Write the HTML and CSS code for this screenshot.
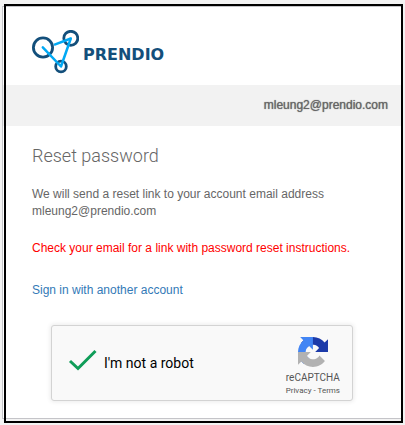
FILE: index.html
```html
<!DOCTYPE html>
<html lang="en">
<head>
<meta charset="utf-8">
<meta name="viewport" content="width=device-width, initial-scale=1">
<title>Reset password</title>
<link rel="stylesheet" href="styles.css">
</head>
<body>
<div class="page">
  <div class="card">
    <header class="brand">
      <svg class="brand-mark" width="48" height="44" viewBox="31 30 48 44" fill="none" aria-hidden="true">
        <g stroke="#134f7b" stroke-width="2.8">
          <circle cx="43" cy="47.5" r="9.6"/>
          <circle cx="70.8" cy="38.3" r="7"/>
          <circle cx="61" cy="66.5" r="5.3"/>
        </g>
        <g stroke="#00a9f4" stroke-width="2.5" stroke-linecap="round" stroke-linejoin="round">
          <path d="M42.8 47.4L61 66.5L70.8 38.5"/>
          <path d="M54 44.8L70.8 38.5" stroke-linecap="butt"/>
        </g>
      </svg>
      <span class="brand-name">PRENDIO</span>
    </header>
    <div class="account-bar">mleung2@prendio.com</div>
    <main class="content">
      <h1 class="title">Reset password</h1>
      <p class="text">We will send a reset link to your account email address<br>mleung2@prendio.com</p>
      <p class="text notice">Check your email for a link with password reset instructions.</p>
      <a class="text switch-account" href="#">Sign in with another account</a>
      <div class="captcha">
        <label class="captcha-label">
          <span class="check">
            <input class="check-input" type="checkbox" checked>
            <svg class="check-mark" width="30" height="22" viewBox="0 0 30 22" fill="none" aria-hidden="true">
              <path d="M2 12L10 19.5L27.5 2" stroke="#0f9d58" stroke-width="3"/>
            </svg>
          </span>
          I'm not a robot
        </label>
        <div class="captcha-brand">
          <svg width="30" height="30" viewBox="0 0 64 64" aria-hidden="true">
            <path fill="#1c3aa9" d="M64 31.955l-.033-1.37V4.687l-7.16 7.16C50.948 4.674 42.033.093 32.05.093c-10.4 0-19.622 4.96-25.458 12.64l11.736 11.86a15.55 15.55 0 0 1 4.754-5.334c2.05-1.6 4.952-2.906 8.968-2.906.485 0 .86.057 1.135.163 4.976.393 9.288 3.14 11.828 7.124l-8.307 8.307L64 31.953"/>
            <path fill="#4285f4" d="M31.862.094l-1.37.033H4.594l7.16 7.16C4.58 13.147 0 22.06 0 32.046c0 10.4 4.96 19.622 12.64 25.458L24.5 45.768a15.55 15.55 0 0 1-5.334-4.754c-1.6-2.05-2.906-4.952-2.906-8.968 0-.485.057-.86.163-1.135.393-4.976 3.14-9.288 7.124-11.828l8.307 8.307L31.86.095"/>
            <path fill="#b2b2b2" d="M.001 32.045l.033 1.37v25.898l7.16-7.16c5.86 7.173 14.774 11.754 24.76 11.754 10.4 0 19.622-4.96 25.458-12.64l-11.736-11.86a15.55 15.55 0 0 1-4.754 5.334c-2.05 1.6-4.952 2.906-8.968 2.906-.485 0-.86-.057-1.135-.163-4.976-.393-9.288-3.14-11.828-7.124l8.307-8.307c-10.522.04-22.4.066-27.295-.005"/>
          </svg>
          <span class="captcha-name">reCAPTCHA</span>
          <span class="captcha-links"><a href="#">Privacy</a> - <a href="#">Terms</a></span>
        </div>
      </div>
    </main>
  </div>
  <div class="frame"></div>
</div>
</body>
</html>
```
FILE: styles.css
```css
* {
  box-sizing: border-box;
}

body {
  margin: 0;
  background: #f3f3f3;
  color: #666;
  font: 12px/17px "Liberation Sans", Arial, sans-serif;
}

a {
  color: inherit;
  text-decoration: none;
}

.page {
  position: relative;
  padding: 6px 2px;
}

.card {
  border: 1px solid #c4c4c8;
  border-right: 0;
  background: #fff;
}

/* Outline drawn over the edges of the card */
.frame {
  position: absolute;
  inset: 4px 2px 2px 4px;
  border: 2px solid #000;
  pointer-events: none;
}

.brand {
  display: flex;
  align-items: center;
  gap: 4px;
  padding: 23px 28px 11px;
}

.brand-mark {
  flex: none;
}

.brand-name {
  padding-top: 6px;
  color: #134f7b;
  font: 700 16px/20px "DejaVu Sans", sans-serif;
}

.account-bar {
  padding: 12px 15px;
  background: #f2f2f2;
  text-align: right;
  text-shadow: 0 0 1px #666;
}

.content {
  padding: 18px 29px 17px;
}

.title {
  margin: 0 0 18px;
  font: 300 18px/24px Roboto, sans-serif;
}

.text {
  margin: 0 0 20px;
}

.notice {
  margin-bottom: 25px;
  color: #f00;
}

.switch-account {
  display: block;
  margin-bottom: 26px;
  color: #337ab7;
}

.captcha {
  display: flex;
  align-items: center;
  justify-content: space-between;
  max-width: 302px;
  height: 76px;
  margin: 0 19px;
  padding: 0 12px 0 16px;
  border: 1px solid #d3d3d3;
  border-radius: 3px;
  background: #f9f9f9;
  box-shadow: 0 0 4px 1px rgba(0, 0, 0, 0.08);
  font-family: Roboto, sans-serif;
}

.captcha-label {
  display: flex;
  align-items: center;
  gap: 6px;
  color: #000;
  font-size: 14px;
}

.check {
  display: grid;
}

.check-input,
.check-mark {
  grid-area: 1 / 1;
}

.check-mark {
  margin-bottom: 6px;
}

.check-input {
  width: 30px;
  height: 22px;
  margin: 0;
  appearance: none;
}

.captcha-brand {
  display: flex;
  flex-direction: column;
  align-items: center;
  padding-top: 8px;
  color: #555;
}

.captcha-name {
  margin-top: 4px;
  font-size: 10px;
  line-height: 14px;
}

.captcha-links {
  font-size: 8px;
  line-height: 12px;
}
```
